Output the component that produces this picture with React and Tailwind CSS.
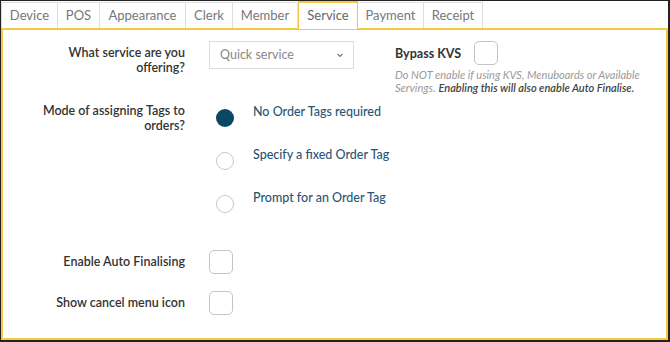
import React from "react";

const tabs = ["Device", "POS", "Appearance", "Clerk", "Member", "Service", "Payment", "Receipt"];
const tabW = [57, 43, 87, 48, 66, 60, 67, 60];

function Radio({ checked, label }) {
  return (
    <div className="flex items-start h-[43px]">
      <div className="w-[44px] flex justify-start pl-[7px] pt-[1px]">
        {checked ? (
          <div className="w-[18px] h-[18px] rounded-full bg-[#0c4764]" />
        ) : (
          <div className="w-[18px] h-[18px] rounded-full border border-[#c8c8c8] bg-white" />
        )}
      </div>
      <div className="text-[12.5px] text-[#2a5575] font-medium leading-[16px] -mt-[4px]">{label}</div>
    </div>
  );
}

function Check() {
  return <div className="w-[24px] h-[24px] rounded-[5px] border border-[#c4c4c4] bg-white" />;
}

export default function App() {
  return (
    <div
      className="w-[670px] h-[342px] bg-white border-t border-l border-r-2 border-b-2 border-[#222] flex flex-col overflow-hidden"
      style={{ fontFamily: "Lato, 'Noto Sans', sans-serif" }}
    >
      <div className="flex h-[27px] shrink-0">
        {tabs.map((t, i) => (
          <div
            key={t}
            style={{ width: tabW[i] }}
            className={
              t === "Service"
                ? "relative z-10 h-[28px] flex items-center justify-center border-t-2 border-l border-r border-[#f5c842] bg-white text-[13px] text-[#666]"
                : "h-[27px] mt-[1px] flex items-center justify-center border-t border-l border-r border-[#dedede] -ml-px first:ml-0 text-[13px] text-[#777]"
            }
          >
            {t}
          </div>
        ))}
      </div>
      <div className="flex-1 border-2 border-[#f5c842] bg-white pt-[11px] text-[#333]">
        <div className="flex">
          <div className="w-[182px] text-right text-[12.5px] font-semibold leading-[15px] pt-[4px] pl-[60px]">
            What service are you offering?
          </div>
          <div className="ml-[24px] w-[145px] h-[28px] border border-[#dcdcdc] flex items-center justify-between pl-[10px] pr-[8px] text-[12.5px] text-[#888]">
            <span>Quick service</span>
            <svg width="10" height="10" viewBox="0 0 10 10" fill="none" stroke="#777" strokeWidth="1.2">
              <path d="M2.5 4 L5 6.5 L7.5 4" />
            </svg>
          </div>
          <div className="ml-[41px] flex flex-col">
            <div className="flex items-center">
              <span className="text-[12.5px] font-bold text-[#333] mr-[13px] mt-[2px]">Bypass KVS</span>
              <Check />
            </div>
            <div className="text-[11px] italic text-[#999] leading-[13px] mt-[3px] whitespace-nowrap">
              <div>Do NOT enable if using KVS, Menuboards or Available</div>
              <div className="flex gap-[3px]">
                <span>Servings.</span>
                <span className="text-[#444] font-semibold">Enabling this will also enable Auto Finalise.</span>
              </div>
            </div>
          </div>
        </div>
        <div className="flex mt-[7px]">
          <div className="w-[182px] text-right text-[12.5px] font-semibold leading-[15px] pt-[2px] pl-[20px]">
            Mode of assigning Tags to orders?
          </div>
          <div className="ml-[24px] pt-[7px] flex flex-col">
            <Radio checked label="No Order Tags required" />
            <Radio label="Specify a fixed Order Tag" />
            <Radio label="Prompt for an Order Tag" />
          </div>
        </div>
        <div className="flex items-center mt-[13px]">
          <div className="w-[182px] text-right text-[12.5px] font-semibold">Enable Auto Finalising</div>
          <div className="ml-[24px]"><Check /></div>
        </div>
        <div className="flex items-center mt-[17px]">
          <div className="w-[182px] text-right text-[12.5px] font-semibold">Show cancel menu icon</div>
          <div className="ml-[24px]"><Check /></div>
        </div>
      </div>
    </div>
  );
}
